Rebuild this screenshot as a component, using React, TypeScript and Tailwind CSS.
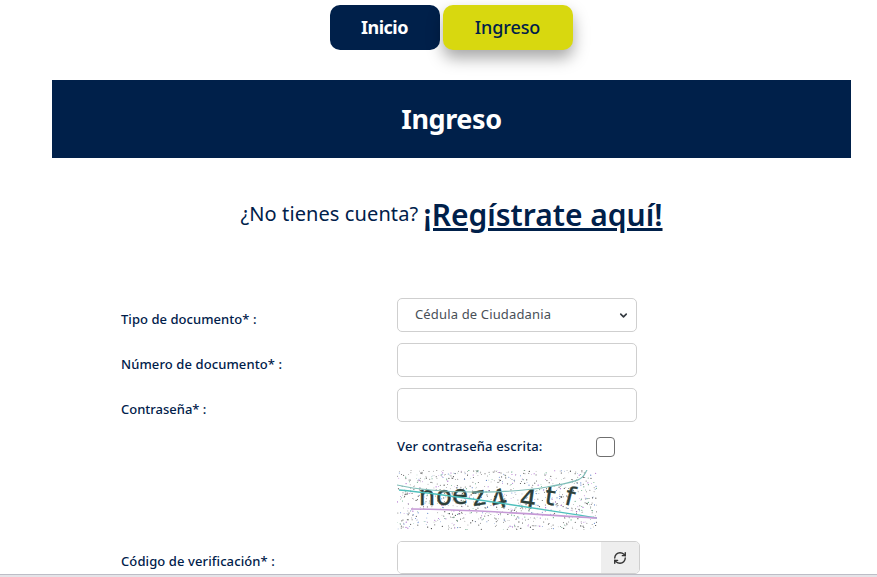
import { RefreshCw, ChevronDown } from 'lucide-react';

// deterministic speckle for the captcha picture
function noiseDots() {
  const dots: { x: number; y: number; c: string; r: number }[] = [];
  const colors = ['#333', '#666', '#555', '#888', '#6a8', '#a6c', '#68c', '#777'];
  let seed = 12345;
  const next = () => {
    seed = (seed * 16807) % 2147483647;
    return seed / 2147483647;
  };
  for (let i = 0; i < 900; i++) {
    dots.push({ x: next() * 200, y: next() * 60, c: colors[Math.floor(next() * colors.length)], r: 0.35 + next() * 0.3 });
  }
  return dots;
}

function Captcha() {
  const dots = noiseDots();
  const letters = [
    ['n', 30, 35, 0],
    ['o', 47, 35, 0],
    ['e', 63, 34, 0],
    ['z', 83, 35, -10],
    ['4', 104, 38, -14],
    ['4', 130, 38, 8],
    ['t', 152, 35, 8],
    ['f', 171, 35, 14],
  ] as const;
  return (
    <svg width="200" height="60" viewBox="0 0 200 60" className="block">
      <rect width="200" height="60" fill="#fff" />
      {dots.map((d, i) => (
        <circle key={i} cx={d.x} cy={d.y} r={d.r} fill={d.c} />
      ))}
      {letters.map(([ch, x, y, rot], i) => (
        <text key={i} x={x} y={y} transform={`rotate(${rot} ${x} ${y})`} fontFamily="'DejaVu Sans', sans-serif" fontSize="26" fontWeight="400" fill="#2c3f3a" stroke="#2c3f3a" strokeWidth="0.4" textAnchor="middle">
          {ch}
        </text>
      ))}
      <path d="M0 15 C40 24 110 24 150 17 S185 8 190 0" fill="none" stroke="#7fbdb8" strokeWidth="1.2" />
      <path d="M2 20 C50 24 110 34 200 48" fill="none" stroke="#4fc0bd" strokeWidth="1.4" />
      <path d="M14 39 C70 39 130 44 200 48" fill="none" stroke="#c69ad6" strokeWidth="1.6" />
    </svg>
  );
}

const inputCls = 'block w-[240px] h-[34px] rounded-[5px] border border-[#cfcfcf] bg-white';

export default function App() {
  return (
    <div className="relative h-[577px] w-[877px] overflow-hidden bg-white font-['Noto_Sans',sans-serif] text-[#00204a]">
      <div className="flex justify-center gap-[3px] pt-[5px] pl-[25px]">
        <a className="flex h-[45px] w-[110px] items-center justify-center rounded-[10px] bg-[#00204a] text-[18px] font-bold tracking-[-0.5px] text-white">Inicio</a>
        <a className="flex h-[45px] w-[130px] items-center justify-center rounded-[10px] bg-[#d8d80f] text-[18px] font-medium tracking-[-0.1px] shadow-[0_8px_16px_rgba(0,0,0,0.35)]">Ingreso</a>
      </div>

      <div className="mx-[52px] mt-[30px] flex h-[78px] w-[799px] items-center justify-center bg-[#00204a]">
        <h1 className="text-[27px] font-bold tracking-[-0.4px] text-white">Ingreso</h1>
      </div>

      <p className="mt-[35px] flex h-[42px] items-center justify-center pl-[26px] text-[20px]">
        <span className="tracking-[0.1px]">¿No tienes cuenta?</span>
        <a className="ml-[5px] text-[30px] font-semibold underline">¡Regístrate aquí!</a>
      </p>

      <form className="mt-[63px] pl-[121px] text-[13px] font-medium">
        <div className="flex h-[34px] items-center">
          <label className="w-[276px] pt-[10px] tracking-[0.05px]">Tipo de documento* :</label>
          <div className="relative">
            <div className={`${inputCls} flex items-center pl-[17px] font-normal text-[#495057] tracking-[0.15px]`}>Cédula de Ciudadania</div>
            <ChevronDown className="absolute right-[8px] top-[12px] h-[11px] w-[11px] text-[#343a40]" strokeWidth={3.5} />
          </div>
        </div>
        <div className="mt-[11px] flex h-[34px] items-center">
          <label className="w-[276px] pt-[10px] tracking-[0.1px]">Número de documento* :</label>
          <input className={inputCls} />
        </div>
        <div className="mt-[11px] flex h-[34px] items-center">
          <label className="w-[276px] pt-[10px]">Contraseña* :</label>
          <input type="password" className={inputCls} />
        </div>
        <div className="ml-[276px] mt-[15px] flex h-[20px] items-center">
          <span className="w-[199px] tracking-[0.15px]">Ver contraseña escrita:</span>
          <span className="block h-[20px] w-[19px] rounded-[4px] border border-[#6f6f6f] bg-white" />
        </div>
        <div className="ml-[276px] mt-[13px]">
          <Captcha />
        </div>
        <div className="mt-[11px] flex h-[33px] items-center">
          <label className="w-[276px] pt-[9px] tracking-[0.1px]">Código de verificación* :</label>
          <div className="flex h-[33px] w-[243px] overflow-hidden rounded-[5px] border border-[#cfcfcf]">
            <input className="min-w-0 flex-1 bg-white" />
            <span className="flex w-[38px] items-center justify-center bg-[#eeeeee] text-[#333]">
              <RefreshCw className="h-[14px] w-[14px]" strokeWidth={2.4} />
            </span>
          </div>
        </div>
      </form>

      <div className="absolute bottom-0 left-0 right-0 h-[3px] bg-[#e4e4e8] border-t border-[#bdbdc6]" />
    </div>
  );
}
